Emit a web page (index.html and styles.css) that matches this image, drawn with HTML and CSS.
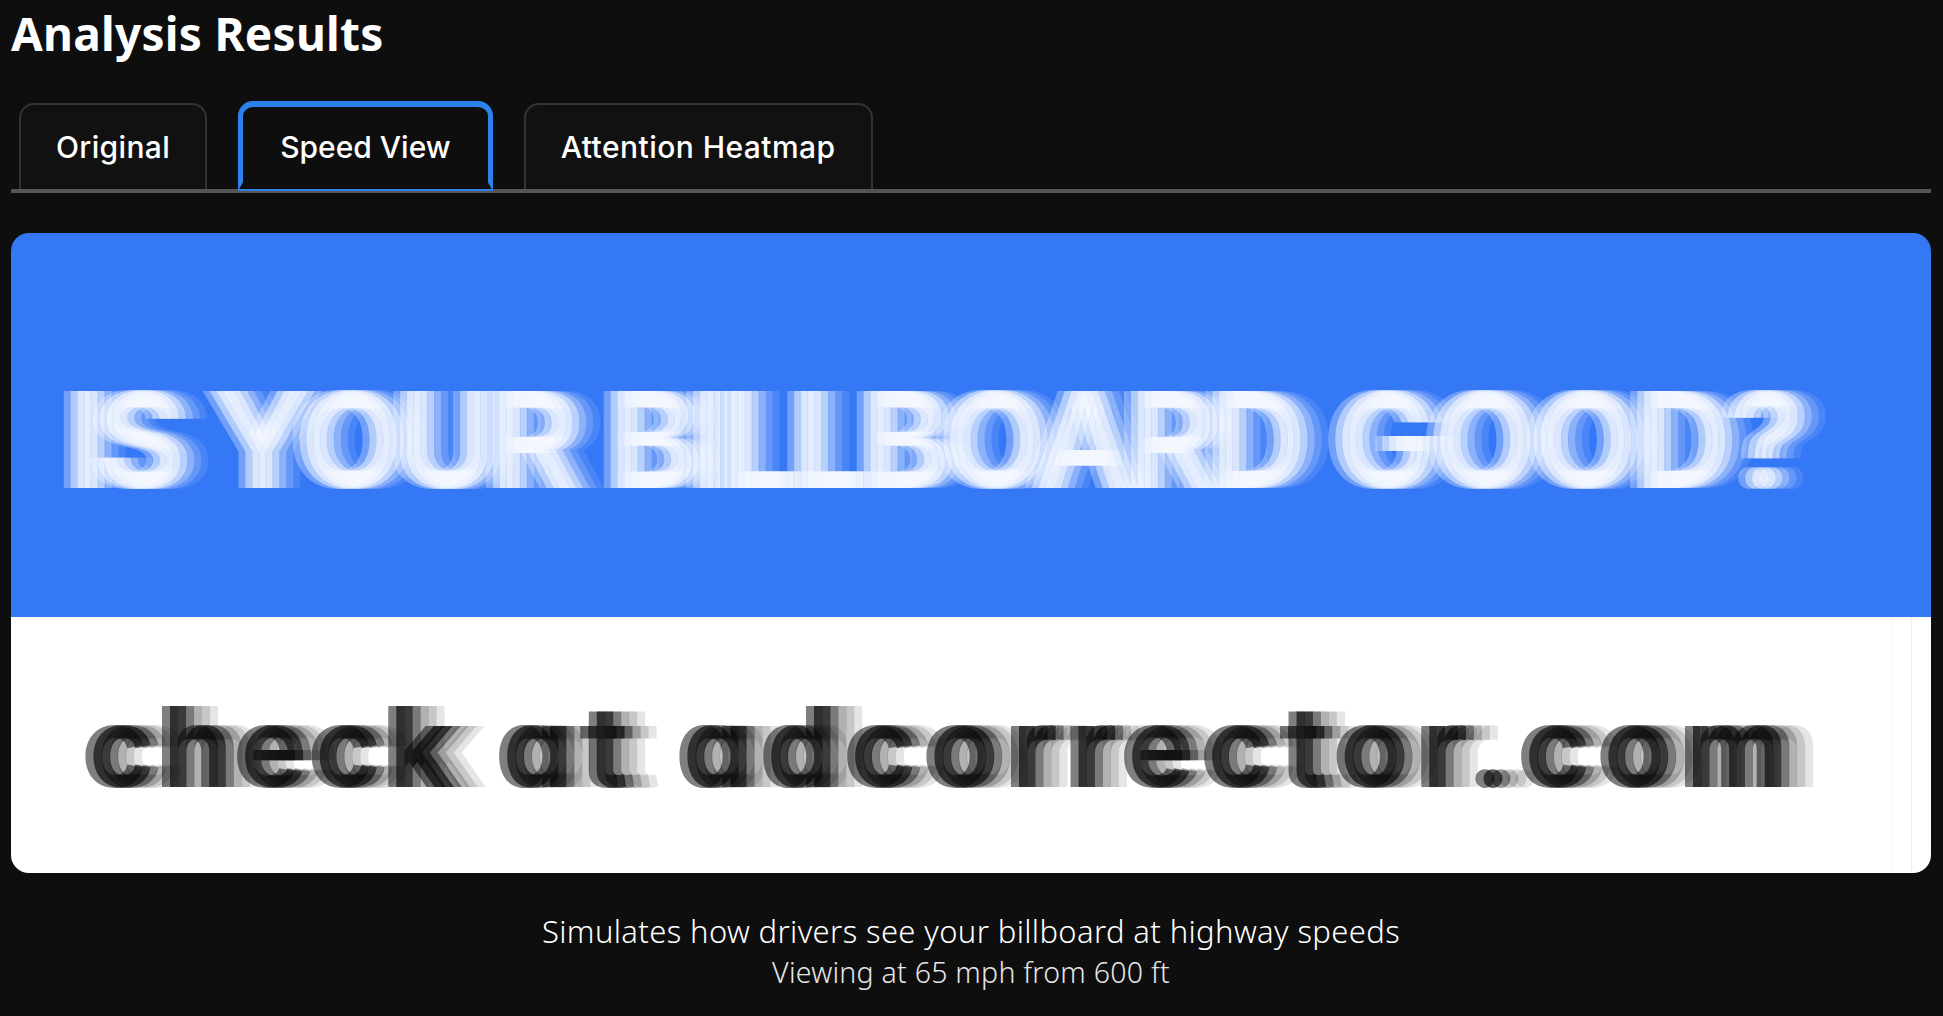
FILE: index.html
```html
<!DOCTYPE html>
<html lang="en">
<head>
<meta charset="utf-8">
<title>Analysis Results</title>
<link rel="stylesheet" href="styles.css">
</head>
<body>
<main class="results">
  <h1 class="title">Analysis Results</h1>
  <nav class="tabs">
    <button class="tab tab-first">Original</button>
    <button class="tab tab-active">Speed View</button>
    <button class="tab tab-wide">Attention Heatmap</button>
  </nav>
  <section class="billboard">
    <div class="panel-blue"><span class="headline"><span class="word-is">IS</span> YOUR <span class="word-billboard">BILLBOARD</span> <span class="word-good">GOOD?</span></span></div>
    <div class="panel-white"><span class="tagline"><span class="word-check">check</span> <span class="word-at">at</span> <span class="word-site">adcorrector.com</span></span></div>
  </section>
  <div class="caption">
    <p class="caption-main">Simulates how drivers see your billboard at highway speeds</p>
    <p class="caption-sub">Viewing at 65 mph from 600 ft</p>
  </div>
</main>
</body>
</html>
```
FILE: styles.css
```css
* { box-sizing: border-box; }
html, body { margin: 0; height: 100%; background: #0e0e0e; overflow: hidden; }
.results { padding: 0 12px 0 11px; font-family: "Noto Sans", sans-serif; color: #fff; }
.title { margin: 0; height: 103px; padding-top: 6px; font-size: 46px; line-height: 54px; font-weight: 700; letter-spacing: 0.25px; }
.tabs { display: flex; gap: 31px; height: 90px; padding-left: 8px; border-bottom: 4px solid #555; align-items: flex-end; }
.tab { height: 86px; padding: 0 36px; background: #111; color: #fff; border: 2px solid #333; border-bottom: 0; border-radius: 15px 15px 0 0; font-family: Inter, sans-serif; font-size: 30px; font-weight: 500; }
.tab-first { padding: 0 35px; letter-spacing: 0.35px; }
.tab-wide { padding: 0 35px; letter-spacing: 0.45px; }
.tab-active { position: relative; height: 90px; margin: 0 0 -2px 0; padding: 0 37px 2px; background: #0e0e0e; border: 5px solid #2c82ea; border-top-width: 6px; border-bottom-width: 2px; }
.tab-active::before, .tab-active::after { content: ""; position: absolute; bottom: 0; width: 4px; height: 7px; background: #0e0e0e; }
.tab-active::before { left: -4px; clip-path: polygon(100% 0, 100% 100%, 0 100%); }
.tab-active::after { right: -4px; clip-path: polygon(0 0, 100% 100%, 0 100%); }
.billboard { margin-top: 40px; height: 640px; border-radius: 18px; overflow: hidden; display: flex; flex-direction: column; }
.panel-blue { height: 384px; flex: none; background: #3578f6; padding: 137px 0 0 44px; }
.panel-white { flex: 1; background: linear-gradient(90deg, #fff 0, #fff 1881px, #f6f8fa 1881px, #f6f8fa 1882px, #fff 1882px, #fff 1900px, #eef1f4 1900px, #eef1f4 1901px, #fff 1901px); padding: 69px 0 0 70px; }
.headline, .tagline { display: block; white-space: nowrap; color: transparent; }
.headline { font-family: Inter, sans-serif; font-size: 133px; line-height: 140px; font-weight: 700; letter-spacing: -4.5px; word-spacing: 8px;
  text-shadow: 0 0 0 rgba(255,255,255,.3), 7px 0 0 rgba(255,255,255,.45), 14px 0 0 rgba(255,255,255,.55), 21px 0 0 rgba(255,255,255,.45), 28px 0 0 rgba(255,255,255,.25), 35px 0 0 rgba(255,255,255,.15), 42px 0 0 rgba(255,255,255,.1); }
.word-is { letter-spacing: -7.5px; }
.word-billboard { letter-spacing: -5.7px; }
.word-good { letter-spacing: -1.8px; }
.tagline { font-family: Inter, sans-serif; font-feature-settings: "cv11" 1; font-size: 112px; line-height: 120px; font-weight: 700; word-spacing: 14px;
  text-shadow: 0 0 0 rgba(0,0,0,.5), 8px 0 0 rgba(0,0,0,.62), 16px 0 0 rgba(0,0,0,.4), 24px 0 0 rgba(0,0,0,.2), 32px 0 0 rgba(0,0,0,.13), 40px 0 0 rgba(0,0,0,.1); }
.word-check { letter-spacing: 8px; }
.word-at { letter-spacing: 14px; }
.word-site { letter-spacing: 13.3px; }
.caption { margin-top: 37px; text-align: center; }
.caption p { margin: 0; font-weight: 300; }
.caption-main { font-size: 31px; line-height: 42px; letter-spacing: 0.37px; }
.caption-sub { font-size: 28.5px; line-height: 40px; letter-spacing: 0.25px; color: #e6e6e6; }
```
